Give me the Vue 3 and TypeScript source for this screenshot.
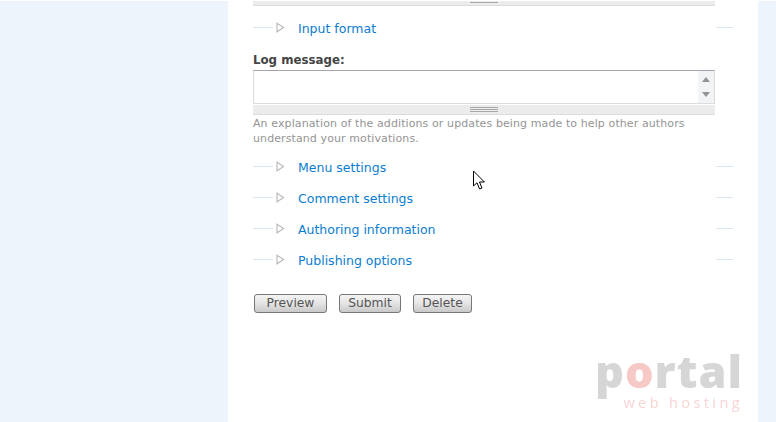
<script setup lang="ts">
const lowerRows: string[] = ['Menu settings', 'Comment settings', 'Authoring information', 'Publishing options']
const buttons: string[] = ['Preview', 'Submit', 'Delete']
</script>

<template>
  <div class="page">
    <aside class="side"></aside>
    <main class="main">
      <div class="grippie top"><span class="grip"></span></div>
      <div class="fieldset first">
        <span class="line"></span>
        <svg class="tri" width="9" height="11" viewBox="0 0 9 11"><path d="M1 1.2 L7.6 5.5 L1 9.8 Z" fill="#fff" stroke="#bcbcbc" stroke-width="1.2" /></svg>
        <a class="link">Input format</a>
        <span class="line right"></span>
      </div>
      <label class="label">Log message:</label>
      <div class="textarea">
        <div class="scroll">
          <svg width="8" height="5" viewBox="0 0 8 5"><path d="M4 0 L8 5 L0 5 Z" fill="#8f949a" /></svg>
          <svg width="8" height="5" viewBox="0 0 8 5"><path d="M0 0 L8 0 L4 5 Z" fill="#8f949a" /></svg>
        </div>
      </div>
      <div class="grippie"><span class="grip"></span></div>
      <p class="desc">An explanation of the additions or updates being made to help other authors understand your motivations.</p>
      <div class="rows">
        <div v-for="row in lowerRows" :key="row" class="fieldset">
          <span class="line"></span>
          <svg class="tri" width="9" height="11" viewBox="0 0 9 11"><path d="M1 1.2 L7.6 5.5 L1 9.8 Z" fill="#fff" stroke="#bcbcbc" stroke-width="1.2" /></svg>
          <a class="link">{{ row }}</a>
          <span class="line right"></span>
        </div>
      </div>
      <div class="actions">
        <button v-for="b in buttons" :key="b" class="btn" type="button">{{ b }}</button>
      </div>
    </main>
    <aside class="side-right"></aside>

    <svg class="cursor" width="14" height="22" viewBox="0 0 14 22">
      <path d="M1.5 1 L1.5 16 L5 12.8 L7.6 19 L10 18 L7.5 12 L12.4 12 Z" fill="#fff" stroke="#000" stroke-width="1" />
    </svg>

    <div class="logo">
      <span class="logo-main">p<span class="logo-o">o</span>rtal</span>
      <span class="logo-sub">web hosting</span>
    </div>
  </div>
</template>

<style>
html, body { margin: 0; background: #fff; }
</style>

<style scoped>
.page {
  position: relative;
  width: 776px;
  height: 422px;
  overflow: hidden;
  display: flex;
  background: #fff;
  font-family: "DejaVu Sans", Verdana, sans-serif;
}
.side { width: 228px; margin-top: 1px; background: #edf4fb; flex: none; }
.side-right { width: 18px; margin-top: 1px; background: #edf4fb; flex: none; }
.main {
  width: 505px;
  padding-left: 25px;
  flex: none;
  display: flex;
  flex-direction: column;
}
.grippie {
  width: 462px;
  height: 9px;
  background: #ececec;
  border-bottom: 1px solid #dcdcdc;
  position: relative;
  flex: none;
}
.grippie.top { height: 4px; margin-top: 1px; }
.grip {
  position: absolute;
  left: 217px;
  top: 2px;
  width: 28px;
  height: 5px;
  border-top: 1px solid #a8a8a8;
  border-bottom: 1px solid #a8a8a8;
  box-sizing: border-box;
  background: linear-gradient(#ececec 0 1px, #a8a8a8 1px 2px, #ececec 2px);
}
.grippie.top .grip { top: 0; height: 2px; border-top: 0; background: #ececec; }
.fieldset {
  display: flex;
  align-items: center;
  height: 31px;
  width: 480px;
  flex: none;
}
.fieldset.first { margin-top: 6px; height: 33px; }
.line { width: 20px; height: 1px; background: #d8e7f2; flex: none; margin-top: -2px; }
.line.right { width: 17px; margin-left: auto; }
.tri { margin-left: 3px; flex: none; margin-top: -2px; }
.link {
  margin-left: 13px;
  font-size: 12.5px;
  color: #0a7cd0;
  white-space: nowrap;
}
.label {
  margin-top: 6px;
  height: 18px;
  line-height: 18px;
  font-size: 11.8px;
  font-weight: 700;
  color: #444;
}
.textarea {
  width: 462px;
  height: 34px;
  box-sizing: border-box;
  border: 1px solid #dcdcdc;
  border-top-color: #a4a4ac;
  display: flex;
  justify-content: flex-end;
  margin-top: 1px;
  margin-bottom: 1px;
  flex: none;
}
.scroll {
  width: 16px;
  background: #f1f3f5;
  display: flex;
  flex-direction: column;
  align-items: center;
  justify-content: space-between;
  padding: 6px 0 6px;
  box-sizing: border-box;
}
.scroll svg { display: block; }
.desc {
  margin: 1px 0 0;
  width: 462px;
  font-size: 11px;
  line-height: 15px;
  letter-spacing: 0.1px;
  color: #949494;
}
.rows { margin-top: 6px; display: flex; flex-direction: column; }
.actions { display: flex; gap: 12px; margin-top: 18px; padding-left: 1px; }
.btn {
  height: 19px;
  box-sizing: border-box;
  padding: 0;
  font-family: inherit;
  font-size: 12.3px;
  line-height: 15px;
  color: #555;
  border: 1px solid #777;
  border-radius: 3px;
  background: linear-gradient(#f4f4f4, #e6e6e6 45%, #c9c9c9);
}
.btn:nth-child(1) { width: 73px; }
.btn:nth-child(2) { width: 62px; }
.btn:nth-child(3) { width: 59px; }
.cursor { position: absolute; left: 472px; top: 170px; }
.logo {
  position: absolute;
  left: 596px;
  top: 346px;
  width: 147px;
  display: flex;
  flex-direction: column;
  align-items: flex-end;
  filter: blur(0.5px);
}
.logo-main {
  font-family: "Open Sans", sans-serif;
  font-size: 45px;
  font-weight: 800;
  line-height: 49px;
  letter-spacing: 1px;
  color: #d6d6d6;
}
.logo-o { color: #f6c9c7; }
.logo-sub {
  font-family: "Open Sans", sans-serif;
  font-size: 14.5px;
  line-height: 16px;
  letter-spacing: 3.4px;
  color: #f8d4d2;
}
</style>
